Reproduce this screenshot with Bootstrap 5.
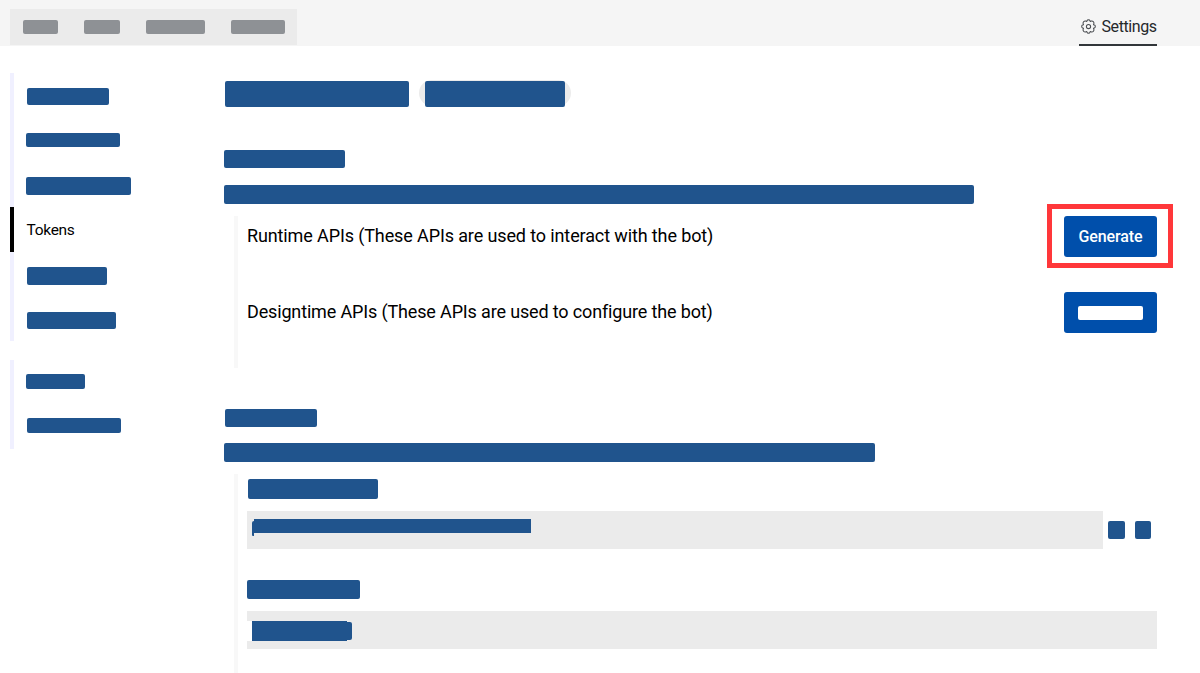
<!DOCTYPE html>
<html lang="en">
<head>
<meta charset="utf-8">
<meta name="viewport" content="width=device-width, initial-scale=1">
<title>Settings – Tokens</title>
<link href="https://cdn.jsdelivr.net/npm/bootstrap@5.3.0/dist/css/bootstrap.min.css" rel="stylesheet">
<style>
body{font-family:Roboto,"Liberation Sans",sans-serif;color:#000;background:#fff;height:673px;overflow:hidden}
.topbar{height:46px;background:#f5f5f5;padding-left:10px;padding-right:43px}
.crumbs{width:287px;height:36px;margin-top:9px;background:#ebebeb;padding-left:12.6px}
.pill{height:14px;border-radius:2px;background:#8e9195}
.tab-settings{width:78px;height:46px;border-bottom:2.5px solid #32363a;color:#25282b;font-size:16px;padding:9px 0 0 1.5px}
.tab-settings span{margin-left:6px;letter-spacing:-.4px;line-height:1;white-space:nowrap}
.blk{background:#20548d;border-radius:2px;flex:none}
.side{width:214px;padding-left:10px;padding-top:27px}
.rail{border-left:4px solid #f0f0ff;padding-left:12px}
.rail-a{height:268px;padding-top:15.4px}
.rail-b{height:88.5px;margin-top:19px;padding-top:14px}
.nudge{margin-left:1px}
.current{height:44.5px;margin:12.5px 0 14.6px -16px;border-left:4px solid #000;padding:1px 0 0 12.5px;font-size:15.5px;letter-spacing:-.3px}
.content{width:933px;padding-top:34.5px;margin-right:43px;margin-left:10px}
.titles{gap:10px;padding-left:1px}
.chip{width:152px;height:26px;border-radius:13px;background:#ebebeb;padding-left:5.5px;margin-top:-1px;padding-top:1px}
.group-line{border-left:4px solid #f8f8f8;margin-left:10px;padding-left:9px}
.api{height:76px;font-size:18px}
.api p{line-height:40px;white-space:nowrap;letter-spacing:-.12px}
.api + .api p{letter-spacing:-.152px}
.btn-token{width:93px;height:41px;background:#004fab;color:#fff;border-radius:3px;border:0;padding:0;font-size:16px;font-weight:500;letter-spacing:-.12px;position:relative}
.btn-token:hover{background:#004088;color:#fff}
.callout{position:absolute;left:-16.6px;top:-12px;width:125.4px;height:63.5px;border:5.5px solid #ff373a;pointer-events:none}
.btn-label{width:65.5px;height:14px;border-radius:2px;background:#fff}
.field{height:38px;background:#ebebeb}
</style>
</head>
<body>
<header class="topbar d-flex justify-content-between">
  <nav class="crumbs d-flex align-items-center">
    <div class="pill" style="width:35px"></div>
    <div class="pill" style="width:36px;margin-left:26.5px"></div>
    <div class="pill" style="width:59.5px;margin-left:25.5px"></div>
    <div class="pill" style="width:54px;margin-left:25.5px"></div>
  </nav>
  <div class="tab-settings d-flex align-items-center">
    <svg class="flex-shrink-0" width="15" height="15" viewBox="0 0 15 15" fill="none" stroke="#4b4e52" stroke-width="1.05" stroke-linejoin="round"><path d="M6.1 1.6Q6.3.7 7.5.7T8.9 1.6L9.3 2.5 10.4 2.1Q11.4 1.8 12.3 2.7T12.9 4.6L12.5 5.7 13.4 6.1Q14.3 6.3 14.3 7.5T13.4 8.9L12.5 9.3 12.9 10.4Q13.2 11.4 12.3 12.3T10.4 12.9L9.3 12.5 8.9 13.4Q8.7 14.3 7.5 14.3T6.1 13.4L5.7 12.5 4.6 12.9Q3.6 13.2 2.7 12.3T2.1 10.4L2.5 9.3 1.6 8.9Q.7 8.7.7 7.5T1.6 6.1L2.5 5.7 2.1 4.6Q1.8 3.6 2.7 2.7T4.6 2.1L5.7 2.5Z"/><circle cx="7.5" cy="7.5" r="2.1"/></svg>
    <span>Settings</span>
  </div>
</header>
<div class="d-flex">
  <aside class="side flex-shrink-0">
    <div class="rail rail-a">
      <div class="blk nudge" style="width:82px;height:17px"></div>
      <div class="blk" style="width:94px;height:14px;margin-top:27.6px"></div>
      <div class="blk" style="width:105px;height:18px;margin-top:30px"></div>
      <div class="current d-flex align-items-center"><span>Tokens</span></div>
      <div class="blk nudge" style="width:79.5px;height:18px"></div>
      <div class="blk nudge" style="width:88.5px;height:17px;margin-top:27.8px"></div>
    </div>
    <div class="rail rail-b">
      <div class="blk" style="width:59.4px;height:15px"></div>
      <div class="blk nudge" style="width:94.4px;height:15px;margin-top:29.3px"></div>
    </div>
  </aside>
  <main class="content flex-shrink-0">
    <div class="titles d-flex">
      <div class="blk" style="width:184px;height:26px"></div>
      <div class="chip"><div class="blk" style="width:140.5px;height:26px"></div></div>
    </div>
    <section>
      <div class="blk" style="width:121px;height:18px;margin-top:43.5px"></div>
      <div class="blk" style="width:749.5px;height:19px;margin-top:17px"></div>
      <div class="group-line" style="margin-top:12px;height:152px">
        <div class="api d-flex justify-content-between"><p class="m-0">Runtime APIs (These APIs are used to interact with the bot)</p><button class="btn btn-token">Generate<span class="callout"></span></button></div>
        <div class="api d-flex justify-content-between"><p class="m-0">Designtime APIs (These APIs are used to configure the bot)</p><button class="btn btn-token d-flex align-items-center justify-content-center"><span class="btn-label"></span></button></div>
      </div>
    </section>
    <section style="padding-top:41.4px">
      <div class="blk nudge" style="width:92px;height:17.5px"></div>
      <div class="blk" style="width:651px;height:19.5px;margin-top:16px"></div>
      <div class="group-line" style="margin-top:12px;height:199px;padding-top:4.7px">
        <div class="blk nudge" style="width:130px;height:19.5px"></div>
        <div class="d-flex align-items-center" style="margin-top:12px">
          <div class="field d-flex align-items-start" style="width:856.4px;padding:8.5px 0 0 5px">
            <div class="blk" style="width:2px;height:15px;margin-top:2px;border-radius:2px 0 0 1px"></div>
            <div class="blk rounded-0" style="width:277.4px;height:14px"></div>
          </div>
          <div class="blk" style="width:17px;height:18px;margin-left:4.5px"></div>
          <div class="blk" style="width:16px;height:18px;margin-left:10px"></div>
        </div>
        <div class="blk" style="width:112.5px;height:19px;margin-top:31px"></div>
        <div class="field d-flex align-items-center" style="margin-top:12.4px;padding-top:2px">
          <div class="bg-white" style="width:5px;height:20.5px"></div>
          <div class="blk rounded-0" style="width:94.5px;height:20.5px"></div>
          <div class="blk" style="width:5.5px;height:18px;border-radius:0 2px 2px 0"></div>
        </div>
      </div>
    </section>
  </main>
</div>
<script src="https://cdn.jsdelivr.net/npm/bootstrap@5.3.0/dist/js/bootstrap.bundle.min.js"></script>
</body>
</html>
